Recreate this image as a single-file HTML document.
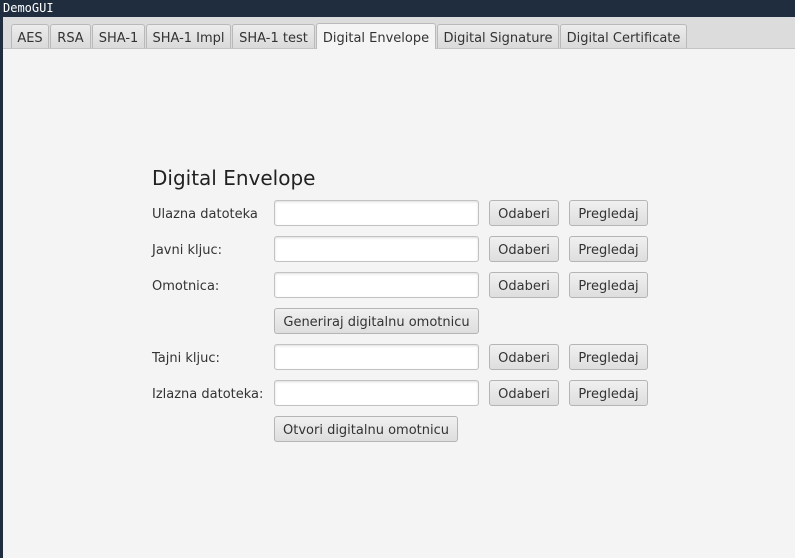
<!DOCTYPE html><html><head><style>
body{margin:0;width:795px;height:558px;background:#1f2d3f;position:relative;overflow:hidden;font-family:"DejaVu Sans",sans-serif;font-size:13px;color:#333}
.t{position:absolute;left:3px;top:1px;color:#fff;font-family:"DejaVu Sans Mono",monospace;font-size:12px}
.win{position:absolute;left:3px;top:17px;right:0;bottom:0;background:#f4f4f4}
.bar{position:absolute;left:3px;top:17px;right:0;height:31px;background:#dcdcdc;border-bottom:1px solid #c4c4c4}
.tab{position:absolute;top:24px;height:24px;box-sizing:border-box;border:1px solid #b9b9b9;border-bottom:none;border-radius:3px 3px 0 0;background:linear-gradient(#ececec,#dadada);line-height:27px;text-align:center;color:#333}
.tab.s{top:23px;height:26px;background:#f4f4f4;line-height:29px}
.l{position:absolute;left:152px}
.in{position:absolute;left:274px;width:205px;height:26px;box-sizing:border-box;border:1px solid #c2c2c2;border-radius:3px;background:#fff;box-shadow:inset 0 1px 2px #ddd}
.b{position:absolute;height:26px;box-sizing:border-box;border:1px solid #b5b5b5;border-radius:3px;background:linear-gradient(#f0f0f0,#dedede);text-align:center;line-height:27px;color:#333}
</style></head><body>
<div class="t">DemoGUI</div>
<div class="win"></div><div class="bar"></div>
<div class="tab" style="left:11px;width:38px">AES</div>
<div class="tab" style="left:50px;width:41px">RSA</div>
<div class="tab" style="left:92px;width:53px">SHA-1</div>
<div class="tab" style="left:146px;width:85px">SHA-1 Impl</div>
<div class="tab" style="left:232px;width:83px">SHA-1 test</div>
<div class="tab s" style="left:316px;width:120px">Digital Envelope</div>
<div class="tab" style="left:437px;width:122px">Digital Signature</div>
<div class="tab" style="left:560px;width:127px">Digital Certificate</div>
<div class="l" style="top:166px;font-size:20px;color:#222">Digital Envelope</div>
<div class="l" style="top:207px">Ulazna datoteka</div>
<div class="l" style="top:243px">Javni kljuc:</div>
<div class="l" style="top:279px">Omotnica:</div>
<div class="l" style="top:351px">Tajni kljuc:</div>
<div class="l" style="top:387px">Izlazna datoteka:</div>
<div class="in" style="top:200px"></div><div class="b" style="left:489px;top:200px;width:70px">Odaberi</div><div class="b" style="left:569px;top:200px;width:79px">Pregledaj</div>
<div class="in" style="top:236px"></div><div class="b" style="left:489px;top:236px;width:70px">Odaberi</div><div class="b" style="left:569px;top:236px;width:79px">Pregledaj</div>
<div class="in" style="top:272px"></div><div class="b" style="left:489px;top:272px;width:70px">Odaberi</div><div class="b" style="left:569px;top:272px;width:79px">Pregledaj</div>
<div class="b" style="left:274px;top:308px;width:205px">Generiraj digitalnu omotnicu</div>
<div class="in" style="top:344px"></div><div class="b" style="left:489px;top:344px;width:70px">Odaberi</div><div class="b" style="left:569px;top:344px;width:79px">Pregledaj</div>
<div class="in" style="top:380px"></div><div class="b" style="left:489px;top:380px;width:70px">Odaberi</div><div class="b" style="left:569px;top:380px;width:79px">Pregledaj</div>
<div class="b" style="left:274px;top:416px;width:184px">Otvori digitalnu omotnicu</div>
</body></html>
